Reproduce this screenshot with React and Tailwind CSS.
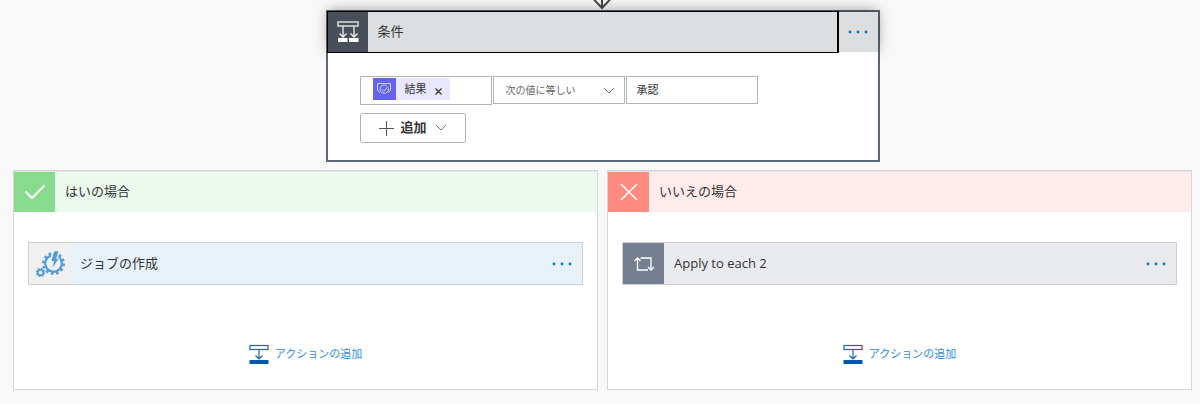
import { useState } from "react";

const ArrowDown = () => (
  <svg width="22" height="10" viewBox="0 0 22 10" fill="none" stroke="#484848" strokeWidth="2">
    <path d="M10 0v8" />
    <path d="M1.500 -1l8.500 9 8.500-9" />
  </svg>
);

const ConditionIcon = () => (
  <svg width="22" height="22" viewBox="0 0 22 22" fill="none" stroke="#f0f0f0" strokeWidth="1.300" aria-hidden="true">
    <rect x="1" y="1" width="20" height="4" />
    <path d="M6 5v11M17 5v11" />
    <path d="M2.500 12.500l3.500 3.500 3.500-3.500M13.500 12.500l3.500 3.500 3.500-3.500" />
    <path d="M1 17h9.500v4H1zM12 17h9.500v4H12z" fill="#fff" stroke="none" />
  </svg>
);

const ApprovalIcon = () => (
  <svg width="16" height="16" viewBox="0 0 16 16" fill="none" stroke="#cfcfff" aria-hidden="true">
    <path d="M4 11.5L1.5 9.5v-7h13v7L12 11.5" />
    <path d="M10.5 4.6a4.2 4.2 0 1 0 1.8 2.6" />
    <path d="M5.8 8.4l2 2 4.4-5" />
  </svg>
);

const GearsIcon = () => (
  <svg width="30" height="28" viewBox="0 0 30 28" fill="none" stroke="#519fda" aria-hidden="true">
    <circle cx="18.500" cy="13.500" r="8.300" strokeWidth="2.200" />
    <circle cx="18.500" cy="13.500" r="10" strokeWidth="3" strokeDasharray="2.6 2.636" />
    <circle cx="5.500" cy="22.500" r="2.800" strokeWidth="2" />
    <circle cx="5.500" cy="22.500" r="4" strokeWidth="1.600" strokeDasharray="1.600 1.540" />
    <path d="M17 0h8l-2 8 2 1-8 11 2-8-4 1z" fill="#f0f0f0" stroke="none" />
    <path d="M19 1.500l4.500-.5-2.300 8h2.300l-6 8.500 1.500-6.500h-2.500z" fill="#519fda" stroke="none" />
  </svg>
);

const LoopIcon = () => (
  <svg width="22" height="18" viewBox="0 0 22 18" fill="none" stroke="#fff" strokeWidth="1.300" aria-hidden="true">
    <path d="M4.500 3v12H15" />
    <path d="M1.500 6l3-3 3 3" />
    <path d="M7.500 3H18v12" />
    <path d="M15 12l3 3 3-3" />
  </svg>
);

const CheckIcon = () => (
  <svg width="22" height="16" viewBox="0 0 22 16" fill="none" stroke="#fff" strokeWidth="2" aria-hidden="true">
    <path d="M1.500 7.500l6.500 6.500L20.500 1.500" />
  </svg>
);

const CrossIcon = () => (
  <svg width="18" height="18" viewBox="0 0 18 18" fill="none" stroke="#fff" strokeWidth="1.500" aria-hidden="true">
    <path d="M1 1l16 16M17 1L1 17" />
  </svg>
);

const InsertIcon = () => (
  <svg width="20" height="20" viewBox="0 0 20 20" fill="none" stroke="#1a65b0" strokeWidth="1.200" aria-hidden="true">
    <rect x="1" y="1.500" width="18" height="4" />
    <path d="M10 5.500v9M6.500 11.500l3.500 3.500 3.500-3.500" />
    <path d="M0.500 16h19v4h-19z" fill="#0058ad" stroke="none" />
  </svg>
);

const PlusIcon = () => (
  <svg width="15" height="15" viewBox="0 0 15 15" stroke="#555" aria-hidden="true">
    <path d="M7.500 0v15M0 7.500h15" />
  </svg>
);

const ChevronIcon = ({ className }) => (
  <svg width="12" height="8" viewBox="0 0 12 8" fill="none" stroke="#777" className={className} aria-hidden="true">
    <path d="M1 1l5 5 5-5" />
  </svg>
);

const MoreButton = ({ label }) => (
  <button type="button" aria-label={label} className="flex w-10 shrink-0 items-center justify-center">
    <svg width="20" height="4" viewBox="0 0 20 4" fill="#0078d7">
      <circle cx="2" cy="2" r="1.400" />
      <circle cx="10" cy="2" r="1.400" />
      <circle cx="18" cy="2" r="1.400" />
    </svg>
  </button>
);

const Branch = ({ title, icon, iconClass, headerClass, children }) => (
  <section className="flex flex-1 flex-col border border-[#d6d6d6] bg-white">
    <header className={`flex h-[41px] items-stretch border-t border-[#e2e2e2] ${headerClass}`}>
      <div className={`flex w-[41px] items-center justify-center ${iconClass}`}>{icon}</div>
      <h2 className="self-center pl-2.5 text-[13px]">{title}</h2>
    </header>
    <div className="flex flex-col items-center px-3.5 pt-[30px] pb-[25px]">
      {children}
      <button type="button" className="mt-[59px] flex items-center gap-1.5 text-[11px] text-[#2b8de0]">
        <InsertIcon />
        アクションの追加
      </button>
    </div>
  </section>
);

const ActionCard = ({ title, icon, iconClass, cardClass }) => (
  <div className={`flex h-[43px] w-full border border-[#d0d0d0] ${cardClass}`}>
    <button type="button" className="flex flex-1 items-stretch text-left text-[13px]">
      <span className={`flex w-[41px] items-center justify-center ${iconClass}`}>{icon}</span>
      <span className="self-center pl-2.5">{title}</span>
    </button>
    <MoreButton label={`${title} のメニュー`} />
  </div>
);

const App = () => {
  const [operator, setOperator] = useState("equals");
  const [value, setValue] = useState("承認");
  const [hasToken, setHasToken] = useState(true);

  return (
    <main className="flex min-h-screen flex-col items-center bg-[#f8f8f8] pr-2 pl-[13px] font-['Open_Sans','Noto_Sans_CJK_JP',sans-serif] text-[#333]">
      <ArrowDown />

      {/* Condition */}
      <section className="w-full max-w-[554px] border-2 border-[#5c6675] bg-white">
        <div className="flex h-10 bg-[#dddee0] shadow-[0_-2px_12px_rgba(0,0,0,0.35)]">
          <button
            type="button"
            className="flex flex-1 items-stretch border-r border-black text-left text-[13px] outline-1 outline-black"
          >
            <span className="flex w-10 items-center justify-center bg-[#484f5a]">
              <ConditionIcon />
            </span>
            <span className="self-center pl-2.5">条件</span>
          </button>
          <MoreButton label="条件 のメニュー" />
        </div>

        <div className="bg-white px-8 pt-6 pb-[17px]">
          <div className="flex items-start gap-px">
            <div className="flex h-[29px] w-[132px] border border-[#b4b4b4] pl-3 text-[11px]">
              {hasToken && (
                <span className="mt-px flex h-[22px] items-center bg-[#e8e7ff]">
                  <span className="flex h-full w-[23px] items-center justify-center bg-[#6264f0]">
                    <ApprovalIcon />
                  </span>
                  <span className="pl-[9px]">結果</span>
                  <button
                    type="button"
                    aria-label="結果 を削除"
                    onClick={() => setHasToken(false)}
                    className="px-2 pt-1"
                  >
                    <svg width="7" height="7" viewBox="0 0 7 7" stroke="#333" strokeWidth="1.200">
                      <path d="M.5 .5l6 6M6.500 .5l-6 6" />
                    </svg>
                  </button>
                </span>
              )}
            </div>
            <div className="relative">
              <select
                aria-label="演算子"
                value={operator}
                onChange={(e) => setOperator(e.target.value)}
                className="block h-7 w-[132px] appearance-none border border-[#b4b4b4] bg-white pr-6 pl-3 text-[10px] text-[#666]"
              >
                <option value="equals">次の値に等しい</option>
                <option value="not">次の値に等しくない</option>
              </select>
              <ChevronIcon className="pointer-events-none absolute top-[11px] right-2.5" />
            </div>
            <input
              type="text"
              aria-label="値"
              value={value}
              onChange={(e) => setValue(e.target.value)}
              className="h-7 w-[132px] border border-[#b4b4b4] px-2.5 pb-0.5 text-[11px]"
            />
          </div>

          <button
            type="button"
            className="mt-2 flex h-[30px] w-[106px] items-center rounded-xs border border-[#b4b4b4] pl-[18px] text-[13px] font-bold"
          >
            <PlusIcon />
            <span className="pr-2 pl-[7px]">追加</span>
            <ChevronIcon />
          </button>
        </div>
      </section>

      {/* Branches */}
      <div className="mt-2 flex w-full gap-[9px]">
        <Branch
          title="はいの場合"
          icon={<CheckIcon />}
          iconClass="bg-[#88da8d]"
          headerClass="bg-[#ebfaed]"
        >
          <ActionCard
            title="ジョブの作成"
            icon={<GearsIcon />}
            iconClass="bg-[#f0f0f0]"
            cardClass="bg-[#e6f1fa]"
          />
        </Branch>
        <Branch
          title="いいえの場合"
          icon={<CrossIcon />}
          iconClass="bg-[#ff8a80]"
          headerClass="bg-[#ffecea]"
        >
          <ActionCard
            title="Apply to each 2"
            icon={<LoopIcon />}
            iconClass="bg-[#748091]"
            cardClass="bg-[#e9eaee]"
          />
        </Branch>
      </div>
    </main>
  );
};

export default App;
